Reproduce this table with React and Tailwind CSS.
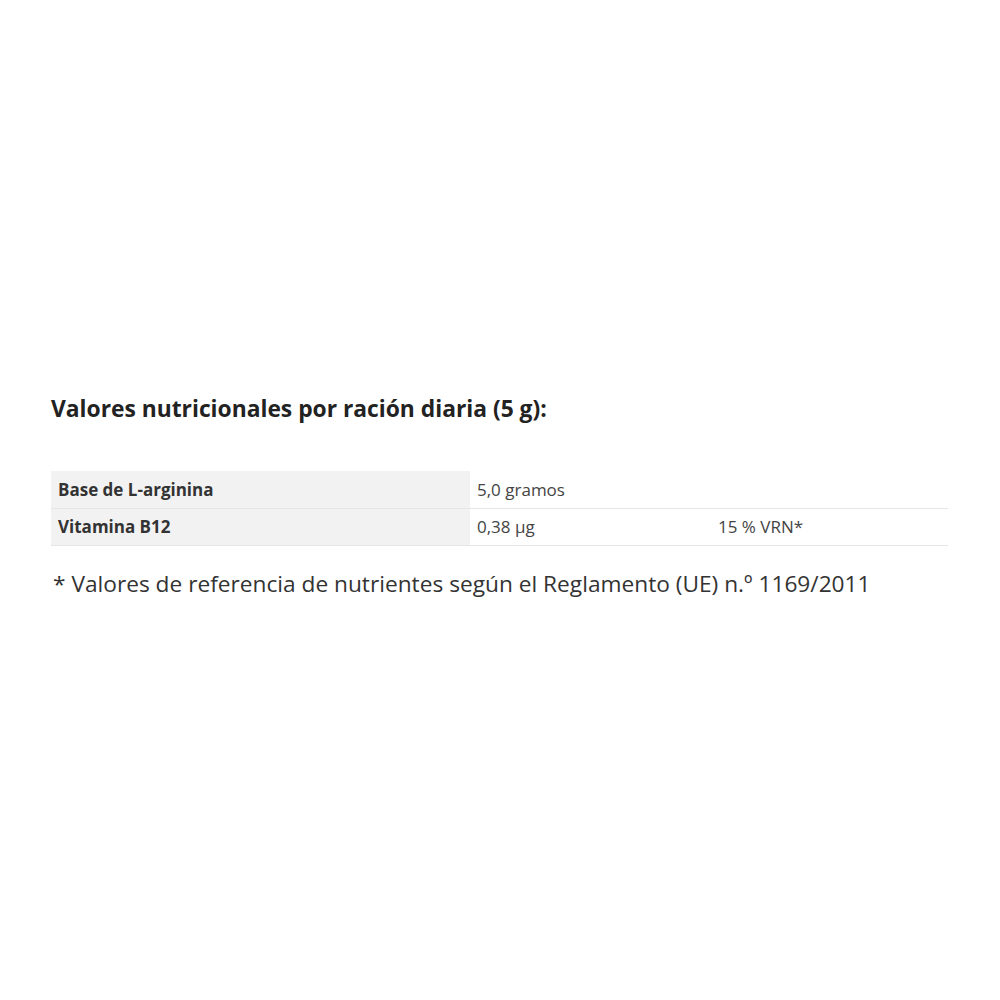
export default function App() {
  const rows = [
    { name: "Base de L-arginina", amount: "5,0 gramos", vrn: "" },
    { name: "Vitamina B12", amount: "0,38 µg", vrn: "15 % VRN*" },
  ];

  return (
    <div
      className="h-[1000px] w-[1000px] bg-white px-[51px] pt-[393px] text-[#333]"
      style={{ fontFamily: '"Open Sans", sans-serif' }}
    >
      {/* ===== HEADING ===== */}
      <h2 className="text-[22.8px] font-bold leading-[32px] text-[#222]">
        Valores nutricionales por ración diaria (5 g):
      </h2>

      {/* ===== NUTRITION TABLE ===== */}
      <table className="mt-[46px] w-[897px] border-collapse text-[17px] text-[#444]">
        <tbody>
          {rows.map((row) => (
            <tr key={row.name} className="border-b border-[#e6e6e6]">
              <td className="h-[37px] w-[419px] bg-[#f2f2f2] px-[7px] font-bold text-[#333]">
                {row.name}
              </td>
              <td className="w-[241px] px-[7px]">{row.amount}</td>
              <td className="px-[7px]">{row.vrn}</td>
            </tr>
          ))}
        </tbody>
      </table>

      {/* ===== FOOTNOTE ===== */}
      <p className="mt-[22px] pl-[2px] text-[22.7px] leading-[32px] text-[#333]">
        * Valores de referencia de nutrientes según el Reglamento (UE) n.º 1169/2011
      </p>
    </div>
  );
}
